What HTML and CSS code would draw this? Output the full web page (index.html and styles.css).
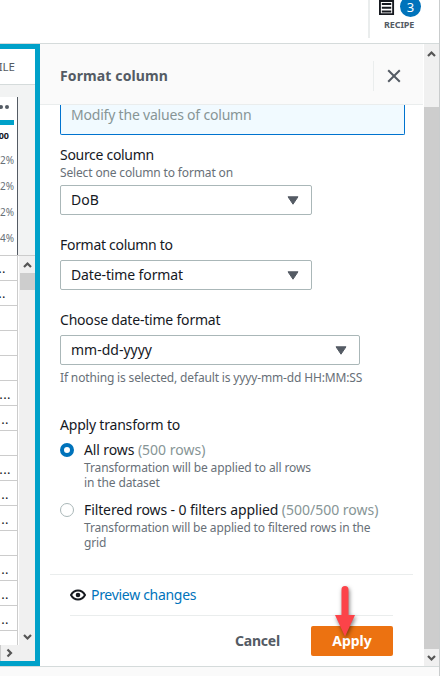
FILE: index.html
```html
<!DOCTYPE html>
<html lang="en">
<head>
<meta charset="utf-8">
<title>Format column</title>
<link rel="stylesheet" href="styles.css">
</head>
<body>
<div class="app">
  <header class="topbar">
    <div class="recipe">
      <div class="recipe-icons">
        <svg width="17" height="17" viewBox="0 0 17 17"><path d="M1 1h14v14H1z" fill="#fff" stroke="#16191f" stroke-width="2"/><path d="M3 4.2h10M3 8.2h10M3 12.2h10" stroke="#16191f" stroke-width="2"/></svg>
        <span class="count">3</span>
      </div>
      <div class="recipe-label">RECIPE</div>
    </div>
  </header>
  <main class="main">
    <section class="grid-pane">
      <div class="tab"><span>PROFILE</span></div>
      <div class="summary">
        <div class="column-card">
          <div class="more"><i></i><i></i></div>
          <div class="bar"></div>
          <b class="total">500</b>
          <span class="pct">2%</span>
          <span class="pct">2%</span>
          <span class="pct">2%</span>
          <span class="pct">4%</span>
        </div>
      </div>
      <div class="data">
        <div class="left">
          <div class="rows">
            <div class="r">..</div><div class="r">..</div><div class="r"></div><div class="r"></div>
            <div class="r"></div><div class="r wide">...</div><div class="r low">..</div><div class="r"></div>
            <div class="r wide">...</div><div class="r low">..</div><div class="r low">..</div><div class="r"></div>
            <div class="r low">..</div><div class="r low">..</div><div class="r low">..</div><div class="r last"></div>
          </div>
          <div class="hscroll"><svg width="10" height="10" viewBox="0 0 10 10"><path d="M2.5 1.5 6 5 2.5 8.5" class="chev"/></svg></div>
        </div>
        <div class="vscroll">
          <svg width="15" height="17" viewBox="0 0 15 17"><path d="M4 11 7.5 7.500l3.500 3.500" class="chev"/></svg>
          <div class="thumb"></div>
          <svg class="down" width="15" height="17" viewBox="0 0 15 17"><path d="M4 7l3.500 3.500L11 7" class="chev"/></svg>
        </div>
      </div>
    </section>
    <section class="panel">
      <div class="panel-head">
        <h1><span>Format column</span></h1>
        <button class="close" aria-label="Close"><svg width="14" height="14" viewBox="0 0 14 14"><path d="M1.2 1.2l11.6 11.6M12.8 1.2 1.2 12.8" stroke="#545b64" stroke-width="2"/></svg></button>
      </div>
      <div class="panel-body">
        <div class="info">Modify the values of column</div>
        <div class="field source">
          <label class="tight">Source column</label>
          <p class="hint">Select one column to format on</p>
          <div class="select"><span>DoB</span><svg width="12" height="9" viewBox="0 0 12 9"><path d="M1 .8h10L6 8.2z" class="caret"/></svg></div>
        </div>
        <div class="field format">
          <label class="tight">Format column to</label>
          <div class="select"><span class="snug">Date-time format</span><svg width="12" height="9" viewBox="0 0 12 9"><path d="M1 .8h10L6 8.2z" class="caret"/></svg></div>
        </div>
        <div class="field choose">
          <label>Choose date-time format</label>
          <div class="select large"><span>mm-dd-yyyy</span><svg width="12" height="9" viewBox="0 0 12 9"><path d="M1 .8h10L6 8.2z" class="caret"/></svg></div>
          <p class="hint after">If nothing is selected, default is yyyy-mm-dd HH:MM:SS</p>
        </div>
        <div class="field apply-to">
          <label>Apply transform to</label>
          <div class="option">
            <span class="radio on"></span>
            <div><p class="name">All rows <em>(500 rows)</em></p><p class="hint first">Transformation will be applied to all rows<br>in the dataset</p></div>
          </div>
          <div class="option second">
            <span class="radio"></span>
            <div><p class="name">Filtered rows - 0 filters applied <em>(500/500 rows)</em></p><p class="hint">Transformation will be applied to filtered rows in the<br>grid</p></div>
          </div>
        </div>
        <footer class="foot">
          <a class="preview"><svg width="16" height="12" viewBox="0 0 16 12"><path d="M1 6c3.3-6 10.7-6 14 0-3.300 6-10.700 6-14 0z" fill="none" stroke="#16191f" stroke-width="2"/><circle cx="8" cy="6" r="2.300" fill="#16191f"/></svg><span class="tight">Preview changes</span></a>
          <div class="actions">
            <button class="cancel"><span>Cancel</span></button>
            <button class="apply"><span>Apply</span>
              <svg class="pointer" width="32" height="60" viewBox="0 0 32 60"><path d="M16 5c2.400 0 3.500 1.500 3.500 3.500V34H26L16 55.500 6 34h6.500V8.500C12.500 6.500 13.600 5 16 5z" fill="#fc4349"/></svg>
            </button>
          </div>
        </footer>
      </div>
    </section>
    <div class="vscroll page-scroll">
      <svg width="15" height="17" viewBox="0 0 15 17"><path d="M4 12 7.500 8.500 11 12" class="chev"/></svg>
      <div class="thumb"></div>
      <svg class="down" width="15" height="17" viewBox="0 0 15 17"><path d="M4 7l3.500 3.500L11 7" class="chev"/></svg>
    </div>
  </main>
</div>
</body>
</html>
```
FILE: styles.css
```css
* { box-sizing: border-box; }
body { margin: 0; width: 447px; height: 676px; overflow: hidden; background: #fff; color: #16191f; font: 14px/20px "Noto Sans", sans-serif; }
p, h1 { margin: 0; }
button { border: 0; padding: 0; font: inherit; background: none; }
svg { display: block; flex: none; }
.app { width: 440px; height: 676px; border-right: 1px solid #c9cccd; background: #fafafa; display: flex; flex-direction: column; }
.topbar { height: 44px; flex: none; background: #fff; border-bottom: 1px solid #d5dbdb; display: flex; justify-content: flex-end; }
.recipe { width: 71px; height: 38px; border-left: 2px solid #eaeded; }
.recipe-icons { display: flex; padding-left: 9px; height: 17px; }
.recipe-icons svg { width: 16px; height: 16px; }
.count { width: 21px; height: 21px; margin: -4px 0 0 5px; border-radius: 50%; background: #0073bb; color: #fff; font-size: 13px; line-height: 22px; text-align: center; }
.recipe-label { font-size: 9px; line-height: 12px; font-weight: 700; color: #545b64; padding: 2px 0 0 14px; letter-spacing: -.1px; }
.main { height: 623px; flex: none; display: flex; background: #fff; border-bottom: 1px solid #d5dbdb; }
.grid-pane { width: 40px; height: 622px; border: 5px solid #00a1c9; border-left: 0; display: flex; flex-direction: column; background: #fff; overflow: hidden; }
.tab { height: 36px; flex: none; border-bottom: 1px solid #d5dbdb; display: flex; justify-content: flex-end; padding: 8px 20px 0 0; color: #545b64; font-size: 11.500px; line-height: 19px; }
.summary { height: 170px; flex: none; background: #f2f3f3; padding-top: 12px; }
.column-card { width: 18px; height: 158px; background: #fff; border-right: 1px solid #545b64; display: flex; flex-direction: column; align-items: flex-end; overflow: hidden; }
.more { display: flex; gap: 2px; padding: 8px 8px 0 0; height: 23px; }
.more i { width: 4px; height: 4px; border-radius: 50%; background: #545b64; }
.bar { height: 5px; flex: none; margin-right: 3px; background: #00a1c9; align-self: stretch; }
.total { font-size: 9px; line-height: 22px; height: 20px; padding-right: 8px; }
.pct { height: 26px; font-size: 10px; line-height: 31px; padding-right: 3px; color: #687078; }
.data { flex: 1; display: flex; min-height: 0; border-top: 1px solid #ccc; }
.left { width: 19px; flex: none; display: flex; flex-direction: column; }
.rows { width: 18px; height: 389px; border-right: 1px solid #ccc; overflow: hidden; }
.r { height: 25px; border-bottom: 1px solid #ccc; padding-right: 11px; display: flex; justify-content: flex-end; letter-spacing: .4px; line-height: 24px; font-size: 13px; }
.r.low { padding-right: 8px; line-height: 26px; }
.r.wide { padding-right: 6px; line-height: 26px; }
.hscroll { height: 16px; background: #f0f0f0; border-left: 1px solid #ccc; display: flex; align-items: center; padding-left: 4px; }
.vscroll { width: 16px; background: #f0f0f0; display: flex; flex-direction: column; align-items: center; }
.vscroll .thumb { height: 17px; width: 15px; background: #cdcdcd; }
.vscroll .down { margin-top: auto; margin-bottom: 16px; }
.chev { fill: none; stroke: #555; stroke-width: 2.200; }
.panel { width: 384px; flex: none; display: flex; flex-direction: column; }
.panel-head { width: 383px; height: 61px; flex: none; background: #fafafa; border-bottom: 1px solid #eaeded; display: flex; justify-content: space-between; align-items: center; padding: 3px 0 0 20px; }
h1 { font-size: 14px; line-height: 20px; font-weight: 700; color: #545b64; letter-spacing: .12px; }
.close { width: 50px; height: 30px; border-left: 1px solid #eaeded; display: flex; align-items: center; padding-left: 13px; }
.panel-body { padding: 0 19px 0 20px; display: flex; flex-direction: column; }
.info { height: 30px; border: 1px solid #0073cf; border-top: 0; border-radius: 0 0 2px 2px; background: #f1faff; color: #879596; line-height: 19px; padding-left: 10px; letter-spacing: -.2px; }
.field { display: flex; flex-direction: column; }
.source { margin-top: 10px; }
.format, .choose { margin-top: 20px; }
label { letter-spacing: -.2px; }
.tight { letter-spacing: -.3px; }
.snug { letter-spacing: -.12px; }
.hint { font-size: 12px; line-height: 15px; color: #687078; white-space: nowrap; letter-spacing: -.15px; }
.hint.first { letter-spacing: -.12px; }
.source .hint { margin-bottom: 5px; }
.select { width: 252px; height: 30px; border: 1px solid #aab7b8; border-radius: 2px; display: flex; justify-content: space-between; align-items: center; padding: 0 12px 0 10px; }
.format .select, .choose .select { margin-top: 5px; }
.select.large { width: 300px; }
.caret { fill: #545b64; stroke: #545b64; stroke-linejoin: round; }
.after { margin-top: 5px; }
.apply-to { margin-top: 30px; }
.option { display: flex; gap: 10px; margin-top: 5px; }
.option.second { margin-top: 10px; }
.option em { font-style: normal; color: #879596; letter-spacing: 0; }
.name { white-space: nowrap; letter-spacing: -.11px; }
.radio { width: 14px; height: 14px; flex: none; margin-top: 3px; border: 1px solid #aab7b8; border-radius: 50%; }
.radio.on { border: 4.500px solid #0073bb; }
.foot { margin: 24px -8px 0 -10px; border-top: 1px solid #eaeded; padding: 0 20px; }
.preview { height: 41px; display: flex; align-items: center; gap: 5px; color: #0073bb; border-bottom: 1px solid #eaeded; }
.actions { display: flex; justify-content: flex-end; padding-top: 10px; line-height: 30px; font-weight: 700; }
.cancel { color: #545b64; height: 30px; margin-right: 31px; letter-spacing: -.2px; }
.apply { position: relative; width: 82px; height: 30px; border-radius: 2px; background: #ec7211; color: #fff; }
.pointer { position: absolute; left: 18px; top: -45px; filter: drop-shadow(1px 2px 2px rgba(0,0,0,.5)); }
.page-scroll { width: 15px; height: 622px; }
.page-scroll .thumb { height: 542px; margin-top: 46px; }
.page-scroll .down { margin: 0; }
```
